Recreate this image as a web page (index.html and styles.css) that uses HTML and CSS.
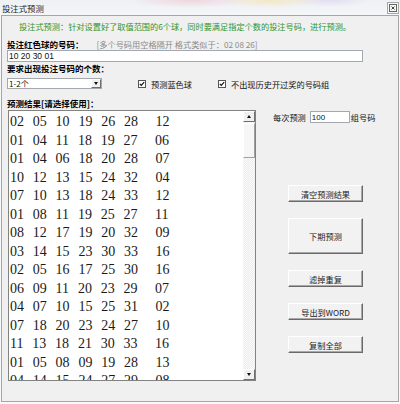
FILE: index.html
```html
<!DOCTYPE html>
<html lang="zh-CN">
<head>
  <meta charset="UTF-8" />
  <meta name="viewport" content="width=device-width, initial-scale=1.0"/>
  <title>投注式预测</title>
  <link rel="stylesheet" href="styles.css">
</head>
<body>
  <div class="window">
    <div class="titlebar">
      <span class="title">投注式预测</span>
      <span class="close-btn">
        <svg width="8" height="8" viewBox="0 0 8 8">
          <rect x="0.5" y="0.5" width="7" height="7" fill="none" stroke="#666" stroke-width="1"/>
          <path d="M2.5 2.5 L5.5 5.5 M5.5 2.5 L2.5 5.5" stroke="#444" stroke-width="1"/>
        </svg>
      </span>
    </div>

    <div class="panel">
      <p class="intro">投注式预测：针对设置好了取值范围的6个球，同时要满足指定个数的投注号码，进行预测。</p>

      <div class="field-label">
        <b>投注红色球的号码：</b><span class="hint">[多个号码用空格隔开 格式类似于：02 08 26]</span>
      </div>
      <input class="text-input wide" type="text" value="10 20 30 01" />

      <div class="field-label"><b>要求出现投注号码的个数：</b></div>
      <div class="option-row">
        <div class="combo">
          <span class="combo-value">1-2个</span>
          <span class="combo-arrow"></span>
        </div>
        <label class="check check-blue">
          <svg class="box" width="8" height="8" viewBox="0 0 8 8">
            <rect x="0.5" y="0.5" width="7" height="7" fill="#fff" stroke="#555"/>
            <path d="M1.8 3.8 L3.3 5.4 L6.2 2.2" fill="none" stroke="#111" stroke-width="1.2"/>
          </svg>
          预测蓝色球
        </label>
        <label class="check check-history">
          <svg class="box" width="8" height="8" viewBox="0 0 8 8">
            <rect x="0.5" y="0.5" width="7" height="7" fill="#fff" stroke="#555"/>
            <path d="M1.8 3.8 L3.3 5.4 L6.2 2.2" fill="none" stroke="#111" stroke-width="1.2"/>
          </svg>
          不出现历史开过奖的号码组
        </label>
      </div>

      <div class="field-label result-label"><b>预测结果[请选择使用]：</b></div>

      <div class="main">
        <div class="result-box">
<div class="result-list">02 05 10 19 26 28  12
01 04 11 18 19 27  06
01 04 06 18 20 28  07
10 12 13 15 24 32  04
07 10 13 18 24 33  12
01 08 11 19 25 27  11
08 12 17 19 20 32  09
03 14 15 23 30 33  16
02 05 16 17 25 30  16
06 09 11 20 23 29  07
04 07 10 15 25 31  02
07 18 20 23 24 27  10
11 13 18 21 30 33  16
01 05 08 09 19 28  13
04 14 15 24 27 29  08</div>
          <div class="vscroll">
            <span class="sb-btn sb-up"></span>
            <span class="sb-thumb"></span>
            <span class="sb-track"></span>
            <span class="sb-btn sb-down"></span>
          </div>
        </div>

        <div class="side">
          <div class="count-row">
            每次预测<input class="text-input count-input" type="text" value="100" />组号码
          </div>
          <button class="btn btn-clear">清空预测结果</button>
          <button class="btn btn-tall">下期预测</button>
          <button class="btn">滤掉重复</button>
          <button class="btn">导出到WORD</button>
          <button class="btn">复制全部</button>
        </div>
      </div>
    </div>
  </div>
</body>
</html>
```

FILE: styles.css
```css
* {
  box-sizing: border-box;
}

body {
  margin: 0;
  font-family: "Noto Sans CJK SC", sans-serif;
  background: #f7f8fa;
  color: #111;
}

.window {
  width: 400px;
  height: 404px;
  display: flex;
  flex-direction: column;
}

/* glass title bar */
.titlebar {
  height: 15px;
  flex-shrink: 0;
  display: flex;
  align-items: center;
  justify-content: space-between;
  padding: 0 1px 0 2px;
  font-size: 8.4px;
  color: #1c1c1c;
  background:
    radial-gradient(ellipse 60px 8px at 190px 0, rgba(240, 190, 200, 0.55), transparent),
    radial-gradient(ellipse 50px 8px at 270px 0, rgba(245, 225, 160, 0.6), transparent),
    radial-gradient(ellipse 40px 7px at 330px 0, rgba(215, 200, 235, 0.5), transparent),
    linear-gradient(#eef1f5, #f4f6f8);
}

.close-btn {
  width: 12px;
  height: 12px;
  border: 1px solid #a8a8a8;
  background: #f7f7f7;
  display: flex;
  align-items: center;
  justify-content: center;
}

.panel {
  height: 387px;
  margin: 0 1px;
  border: 1px solid #a6a6a6;
  background: #f0f0f0;
  padding: 4px 0 0 5px;
}

.intro {
  margin: 0 0 5px 12px;
  height: 13px;
  line-height: 13px;
  font-size: 8.2px;
  color: #2f942f;
  white-space: nowrap;
}

.field-label {
  height: 12px;
  line-height: 12px;
  font-size: 8.5px;
  white-space: nowrap;
}

.field-label b {
  font-weight: bold;
  color: #000;
}

.hint {
  margin-left: 13px;
  font-size: 8.2px;
  color: #8a8a8a;
}

.text-input {
  height: 12px;
  margin: 0;
  padding: 0 1px;
  border: 1px solid #a4a9b0;
  background: #fff;
  font-family: "Liberation Sans", sans-serif;
  font-size: 8.5px;
  color: #111;
  outline: none;
}

.wide {
  display: block;
  width: 356px;
}

.option-row {
  display: flex;
  align-items: center;
  height: 11px;
  margin-top: 4px;
}

.combo {
  width: 95px;
  height: 11px;
  border: 1px solid #a4a9b0;
  background: #fff;
  display: flex;
  align-items: center;
  justify-content: space-between;
  font-size: 8px;
  padding-left: 1px;
}

.combo-arrow {
  width: 10px;
  height: 9px;
  background: #f0f0f0;
  border: 1px solid;
  border-color: #fff #6d6d6d #6d6d6d #fff;
  position: relative;
}

.combo-arrow::after {
  content: "";
  position: absolute;
  left: 2px;
  top: 2px;
  border-left: 2.5px solid transparent;
  border-right: 2.5px solid transparent;
  border-top: 3px solid #111;
}

.check {
  display: flex;
  align-items: center;
  gap: 5px;
  font-size: 8.2px;
  white-space: nowrap;
}

.check-blue {
  margin-left: 36px;
}

.check-history {
  margin-left: 26px;
}

.result-label {
  margin-top: 8px;
  height: 13px;
  line-height: 13px;
}

.main {
  display: flex;
  height: 271px;
}

.result-box {
  width: 248px;
  margin-left: 1px;
  border: 1px solid #828282;
  background: #fff;
  display: flex;
  overflow: hidden;
}

.result-list {
  flex: 1;
  overflow: hidden;
  padding: 2px 0 0 1px;
  font-family: "Liberation Serif", serif;
  font-size: 14px;
  line-height: 18.5px;
  word-spacing: 5.3px;
  white-space: pre;
  color: #1a1a1a;
}

.vscroll {
  width: 12px;
  display: flex;
  flex-direction: column;
  background: repeating-conic-gradient(#ececec 0 25%, #fbfbfb 0 50%) 0 0 / 2px 2px;
}

.sb-btn {
  height: 11px;
  flex-shrink: 0;
  background: #f0f0f0;
  border: 1px solid;
  border-color: #fff #707070 #707070 #fff;
  position: relative;
}

.sb-btn::after {
  content: "";
  position: absolute;
  left: 3px;
  top: 3px;
  border-left: 2.5px solid transparent;
  border-right: 2.5px solid transparent;
}

.sb-up::after {
  border-bottom: 3px solid #111;
}

.sb-down::after {
  border-top: 3px solid #111;
}

.sb-thumb {
  height: 35px;
  margin-top: 1px;
  background: #f6f6f6;
  border: 1px solid;
  border-color: #fff #a0a0a0 #a0a0a0 #fff;
}

.sb-track {
  flex: 1;
}

.side {
  flex: 1;
  padding: 1px 0 0 17px;
  display: flex;
  flex-direction: column;
  align-items: flex-start;
}

.count-row {
  display: flex;
  align-items: center;
  height: 12px;
  font-size: 8.2px;
  white-space: nowrap;
}

.count-input {
  width: 40px;
  margin: 0 1px 0 4px;
  font-size: 8px;
}

.btn {
  margin: 16px 0 0 15px;
  width: 75px;
  height: 17px;
  padding: 0;
  background: #f2f2f2;
  border: 1px solid;
  border-color: #fff #6a6a6a #6a6a6a #fff;
  box-shadow: inset -1px -1px #a8a8a8;
  font-family: "Noto Sans CJK SC", sans-serif;
  font-size: 8.2px;
  color: #1a1a1a;
}

.btn-clear {
  margin-top: 62px;
}

.btn-tall {
  height: 36px;
}
```
